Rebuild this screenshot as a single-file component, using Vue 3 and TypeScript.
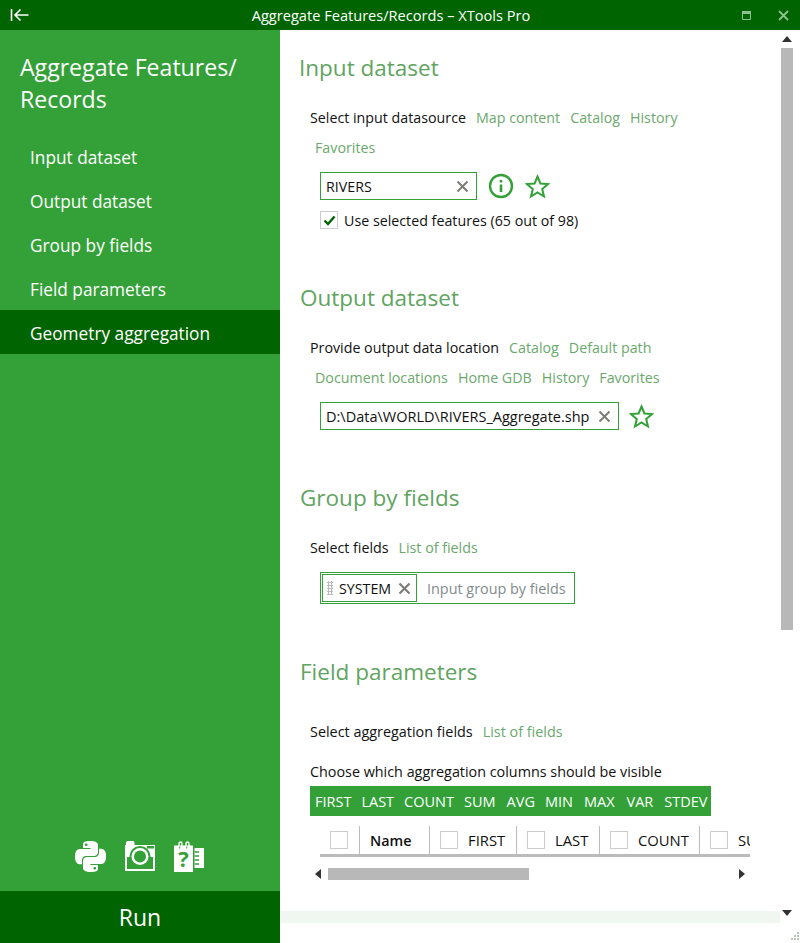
<script setup lang="ts">
const navItems = [
  { label: 'Input dataset', active: false },
  { label: 'Output dataset', active: false },
  { label: 'Group by fields', active: false },
  { label: 'Field parameters', active: false },
  { label: 'Geometry aggregation', active: true },
]
const aggregations = ['FIRST', 'LAST', 'COUNT', 'SUM', 'AVG', 'MIN', 'MAX', 'VAR', 'STDEV']
const columns = [
  { label: 'FIRST', width: 87 },
  { label: 'LAST', width: 83 },
  { label: 'COUNT', width: 100 },
  { label: 'SUM', width: 60 },
]
</script>

<template>
  <div class="window">
    <header class="titlebar">
      <svg class="back" width="20" height="14" viewBox="0 0 20 14">
        <path d="M1.500 1V13M18.500 7H5.500M10.500 1.500L5 7L10.500 12.500" fill="none" stroke="#fff" stroke-width="1.600" />
      </svg>
      <span class="title">Aggregate Features/Records – XTools Pro</span>
      <svg class="win-max" width="9" height="9" viewBox="0 0 9 9">
        <path d="M.5 .5H8.500V8.500H.5Z M.5 2.500H8.500" fill="none" stroke="#8fc08f" stroke-width="1" />
        <rect x="0" y="0" width="9" height="3" fill="#8fc08f" />
      </svg>
      <svg class="win-close" width="11" height="11" viewBox="0 0 11 11">
        <path d="M1 1L10 10M10 1L1 10" fill="none" stroke="#8fc08f" stroke-width="1.800" />
      </svg>
    </header>

    <div class="body">
      <aside class="sidebar">
        <h1 class="side-title">Aggregate Features/<br />Records</h1>
        <nav class="nav">
          <div v-for="item in navItems" :key="item.label" class="nav-item" :class="{ active: item.active }">
            {{ item.label }}
          </div>
        </nav>
        <div class="tools">
          <svg width="31" height="31" viewBox="0 0 24 24" fill="#fff">
            <path d="M14.250.18l.9.2.73.26.59.3.45.32.34.34.25.34.16.33.1.3.04.26.02.2-.01.13V8.500l-.05.63-.13.55-.21.46-.26.38-.3.31-.33.25-.35.19-.35.14-.33.1-.3.07-.26.04-.21.02H8.770l-.69.05-.59.14-.5.22-.41.27-.33.32-.27.35-.2.36-.15.37-.1.35-.07.32-.04.27-.02.21v3.060H3.170l-.21-.03-.28-.07-.32-.12-.35-.18-.36-.26-.36-.36-.35-.46-.32-.59-.28-.73-.21-.88-.14-1.050-.05-1.230.06-1.220.16-1.040.24-.87.32-.71.36-.57.4-.44.42-.33.42-.24.4-.16.36-.1.32-.05.24-.01h.16l.06.01h8.160v-.83H6.180l-.01-2.750-.02-.37.05-.34.11-.31.17-.28.25-.26.31-.23.38-.2.44-.18.51-.15.58-.12.64-.1.71-.06.77-.04.84-.02 1.270.05zm-6.300 1.980l-.23.33-.08.41.08.41.23.34.33.22.41.09.41-.09.33-.22.23-.34.08-.41-.08-.41-.23-.33-.33-.22-.41-.09-.41.09zm13.090 3.950l.28.06.32.12.35.18.36.27.36.35.35.47.32.59.28.73.21.88.14 1.040.05 1.230-.06 1.230-.16 1.040-.24.86-.32.71-.36.57-.4.45-.42.33-.42.24-.4.16-.36.09-.32.05-.24.02-.16-.01h-8.220v.82h5.840l.01 2.760.02.36-.05.34-.11.31-.17.29-.25.25-.31.24-.38.2-.44.17-.51.15-.58.13-.64.09-.71.07-.77.04-.84.01-1.270-.04-1.070-.14-.9-.2-.73-.25-.59-.3-.45-.33-.34-.34-.25-.34-.16-.33-.1-.3-.04-.25-.02-.2.01-.13v-5.340l.05-.64.13-.54.21-.46.26-.38.3-.32.33-.24.35-.2.35-.14.33-.1.3-.06.26-.04.21-.02.13-.01h5.840l.69-.05.59-.14.5-.21.41-.28.33-.32.27-.35.2-.36.15-.36.1-.35.07-.32.04-.28.02-.21V6.070h2.090l.14.01zm-6.470 14.250l-.23.33-.08.41.08.41.23.33.33.23.41.08.41-.08.33-.23.23-.33.08-.41-.08-.41-.23-.33-.33-.23-.41-.08-.41.08z" />
          </svg>
          <svg width="30" height="30" viewBox="0 0 30 30">
            <path fill="#fff" d="M0 30V4H1V1.500Q1 0 2.500 0H8Q9.500 0 9.500 1.500V4H30V30Z" />
            <rect x="2" y="16" width="26" height="12" fill="#33a137" />
            <rect x="22" y="5" width="7" height="2.500" fill="#33a137" />
            <circle cx="15" cy="15.500" r="10.500" fill="#33a137" />
            <circle cx="15" cy="15.500" r="8.500" fill="#fff" />
            <circle cx="15" cy="15.500" r="6" fill="#33a137" />
          </svg>
          <svg width="31" height="31" viewBox="0 0 31 31">
            <path fill="#fff" d="M0 4.500H19V31H0Z" />
            <path d="M5 7V2.500A1.500 1.500 0 0 1 8 2.500V7M12 7V2.500A1.500 1.500 0 0 1 15 2.500V7" fill="none" stroke="#fff" stroke-width="1.400" />
            <path d="M5.700 5.500V7.500M12.700 5.500V7.500" stroke="#33a137" stroke-width="1" />
            <path fill="#fff" d="M20.500 7H30V27H20.500Z" />
            <path d="M20.500 11H25M20.500 15H25M20.500 19H25M20.500 23H25" stroke="#33a137" stroke-width="1.500" />
            <text x="9.500" y="26" text-anchor="middle" class="help-mark">?</text>
          </svg>
        </div>
        <button class="run">Run</button>
      </aside>

      <main class="content">
        <section class="section s-input">
          <h2 class="heading">Input dataset</h2>
          <div class="links">
            <span class="lead">Select input datasource</span>
            <span class="link">Map content</span><span class="link">Catalog</span><span class="link">History</span><span class="link">Favorites</span>
          </div>
          <div class="field-row">
            <div class="input w-short">
              <span>RIVERS</span>
              <svg class="clear" width="13" height="13" viewBox="0 0 13 13"><path d="M1.500 1.500L11.500 11.500M11.500 1.500L1.500 11.500" /></svg>
            </div>
            <svg class="info" width="26" height="26" viewBox="0 0 26 26">
              <circle cx="13" cy="13" r="11" fill="none" stroke="#33a137" stroke-width="2.400" />
              <path d="M13 11.500V19M13 7V9.500" stroke="#33a137" stroke-width="2.600" fill="none" />
            </svg>
            <svg class="star" width="25" height="25" viewBox="0 0 25 25">
              <path d="M12.500 2.500L15.400 9.500L23 10.100L17.200 15L19 22.500L12.500 18.500L6 22.500L7.800 15L2 10.100L9.600 9.500Z" fill="none" stroke="#33a137" stroke-width="2" />
            </svg>
          </div>
          <label class="check-row">
            <span class="checkbox">
              <svg width="13" height="11" viewBox="0 0 13 11"><path d="M1.500 5.500L5 9L11.500 1.500" fill="none" stroke="#006400" stroke-width="2.400" /></svg>
            </span>
            <span>Use selected features (65 out of 98)</span>
          </label>
        </section>

        <section class="section s-output">
          <h2 class="heading shift">Output dataset</h2>
          <div class="links">
            <span class="lead">Provide output data location</span>
            <span class="link">Catalog</span><span class="link">Default path</span><span class="link">Document locations</span><span class="link">Home GDB</span><span class="link">History</span><span class="link">Favorites</span>
          </div>
          <div class="field-row">
            <div class="input w-long">
              <span>D:\Data\WORLD\RIVERS_Aggregate.shp</span>
              <svg class="clear" width="13" height="13" viewBox="0 0 13 13"><path d="M1.500 1.500L11.500 11.500M11.500 1.500L1.500 11.500" /></svg>
            </div>
            <svg class="star" width="25" height="25" viewBox="0 0 25 25">
              <path d="M12.500 2.500L15.400 9.500L23 10.100L17.200 15L19 22.500L12.500 18.500L6 22.500L7.800 15L2 10.100L9.600 9.500Z" fill="none" stroke="#33a137" stroke-width="2" />
            </svg>
          </div>
        </section>

        <section class="section s-group">
          <h2 class="heading shift">Group by fields</h2>
          <div class="links">
            <span class="lead">Select fields</span>
            <span class="link">List of fields</span>
          </div>
          <div class="tag-box">
            <div class="tag">
              <span class="grip"></span>
              <span>SYSTEM</span>
              <svg class="clear" width="13" height="13" viewBox="0 0 13 13"><path d="M1.500 1.500L11.500 11.500M11.500 1.500L1.500 11.500" /></svg>
            </div>
            <span class="placeholder">Input group by fields</span>
          </div>
        </section>

        <section class="section s-params">
          <h2 class="heading shift">Field parameters</h2>
          <div class="links links-wide">
            <span class="lead">Select aggregation fields</span>
            <span class="link">List of fields</span>
          </div>
          <div class="choose">Choose which aggregation columns should be visible</div>
          <div class="agg-bar">
            <span v-for="a in aggregations" :key="a">{{ a }}</span>
          </div>
          <div class="table">
            <div class="cell cell-check"><span class="checkbox"></span></div>
            <div class="cell cell-name">Name</div>
            <div v-for="c in columns" :key="c.label" class="cell" :style="{ width: c.width + 'px' }">
              <span class="checkbox"></span><span class="col-label">{{ c.label }}</span>
            </div>
          </div>
          <div class="hscroll">
            <svg width="6" height="10" viewBox="0 0 6 10"><path d="M6 0V10L0 5Z" fill="#333" /></svg>
            <div class="hthumb"></div>
            <svg class="hright" width="6" height="10" viewBox="0 0 6 10"><path d="M0 0V10L6 5Z" fill="#333" /></svg>
          </div>
        </section>

        <div class="strip"></div>

        <div class="vscroll">
          <svg class="arrow-up" width="10" height="6" viewBox="0 0 10 6"><path d="M0 6H10L5 0Z" fill="#333" /></svg>
          <div class="vthumb"></div>
          <svg class="arrow-down" width="10" height="6" viewBox="0 0 10 6"><path d="M0 0H10L5 6Z" fill="#333" /></svg>
        </div>
        <svg class="grip-corner" width="12" height="12" viewBox="0 0 12 12">
          <path d="M9 1h2v2H9zM6 4h2v2H6zM9 4h2v2H9zM3 7h2v2H3zM6 7h2v2H6zM9 7h2v2H9z" fill="#b8c8b8" />
        </svg>
      </main>
    </div>
  </div>
</template>

<style scoped>
.window {
  width: 800px;
  height: 943px;
  display: flex;
  flex-direction: column;
  overflow: hidden;
  background: #fff;
  font-family: "Open Sans", "Liberation Sans", sans-serif;
  font-size: 14.250px;
  color: #111;
}
.titlebar {
  height: 30px;
  flex: none;
  background: #006400;
  display: flex;
  align-items: center;
  position: relative;
  color: #fff;
}
.back { margin-left: 10px; }
.title {
  position: absolute;
  left: 0;
  right: 0;
  padding-right: 18px;
  text-align: center;
  font-size: 14.600px;
  pointer-events: none;
}
.win-max { margin-left: auto; margin-right: 27px; }
.win-close { margin-right: 11px; }
.body { flex: 1; display: flex; min-height: 0; }
.sidebar {
  width: 280px;
  flex: none;
  background: #33a137;
  color: #fff;
  display: flex;
  flex-direction: column;
}
.side-title {
  margin: 21px 0 0 20px;
  font-weight: 400;
  font-size: 23.100px;
  line-height: 32px;
}
.nav { margin-top: 19px; }
.nav-item {
  height: 44px;
  line-height: 47px;
  padding-left: 30px;
  font-size: 17.250px;
}
.nav-item.active { background: #006400; }
.tools {
  margin-top: auto;
  height: 50px;
  display: flex;
  align-items: flex-start;
  justify-content: center;
  gap: 19px;
}
.help-mark {
  font-family: "Open Sans", sans-serif;
  font-weight: 700;
  font-size: 22px;
  fill: #33a137;
}
.run {
  height: 52px;
  border: 0;
  background: #006400;
  color: #fff;
  font-family: inherit;
  font-size: 23px;
  padding: 0;
}
.content {
  position: relative;
  flex: 1;
  padding-left: 19px;
  overflow: hidden;
}
.section { width: 470px; }
.s-input { padding-top: 21px; }
.s-output { padding-top: 52px; }
.s-group { padding-top: 51px; }
.s-params { padding-top: 51px; }
.heading {
  margin: 0;
  font-weight: 400;
  font-size: 22.500px;
  line-height: 34px;
  color: #5fa460;
}
.heading.shift { margin-left: 1px; }
.links {
  margin-top: 18px;
  padding-left: 11px;
  display: flex;
  flex-wrap: wrap;
  width: 420px;
}
.links-wide { margin-top: 28px; font-size: 14.400px; }
.lead, .link { line-height: 30px; white-space: nowrap; }
.lead { margin-right: 10px; }
.link { color: #6aa96c; margin-right: 10px; }
.s-input .links .link:last-child { margin-left: 5px; }
.s-output .links .link:nth-child(4) { margin-left: 5px; }
.field-row {
  display: flex;
  align-items: center;
  margin: 9px 0 0 21px;
}
.input {
  height: 28px;
  box-sizing: border-box;
  border: 1px solid #33a137;
  display: flex;
  align-items: center;
  justify-content: space-between;
  padding: 0 7px 0 5px;
}
.w-short { width: 157px; }
.w-long { width: 299px; white-space: nowrap; font-size: 14.500px; }
.clear { fill: none; stroke: #7d7d78; stroke-width: 2; flex: none; }
.info { margin-left: 11px; }
.star { margin-left: 10px; }
.info + .star { margin-left: 11px; }
.check-row {
  display: flex;
  align-items: center;
  gap: 6px;
  margin: 11px 0 0 21px;
  height: 18px;
}
.checkbox {
  width: 18px;
  height: 18px;
  box-sizing: border-box;
  border: 1px solid #ccc;
  display: inline-flex;
  align-items: center;
  justify-content: center;
  flex: none;
}
.tag-box {
  margin: 9px 0 0 21px;
  width: 255px;
  height: 32px;
  box-sizing: border-box;
  border: 1px solid #33a137;
  display: flex;
  align-items: center;
  padding-left: 1px;
}
.tag {
  width: 95px;
  height: 28px;
  box-sizing: border-box;
  border: 1px solid #33a137;
  display: flex;
  align-items: center;
  padding-left: 4px;
  flex: none;
}
.grip {
  width: 6px;
  height: 14px;
  margin-right: 6px;
  background-image: radial-gradient(#bbb 1px, transparent 1.100px);
  background-size: 3px 3px;
  flex: none;
}
.tag .clear { margin-left: 7px; stroke-width: 2.200; }
.placeholder { margin-left: 10px; color: #7f8c8d; white-space: nowrap; font-size: 14.400px; }
.choose { margin: 15px 0 0 11px; line-height: 20px; font-size: 14.350px; }
.agg-bar {
  margin: 4px 0 0 11px;
  height: 30px;
  width: 401px;
  box-sizing: border-box;
  background: #33a137;
  color: #fff;
  display: flex;
  align-items: center;
  gap: 10px;
  padding-left: 5px;
  white-space: nowrap;
  font-size: 14.500px;
}
.agg-bar span:nth-child(5), .agg-bar span:nth-child(7), .agg-bar span:nth-child(9) { margin-left: 1px; }
.agg-bar span:nth-child(8) { margin-left: 2px; }
.table {
  margin: 10px 0 0 21px;
  width: 430px;
  height: 31px;
  box-sizing: border-box;
  border-bottom: 3px solid #bbb;
  display: flex;
  overflow: hidden;
}
.cell {
  flex: none;
  box-sizing: border-box;
  height: 28px;
  border-right: 1px solid #bbb;
  display: flex;
  align-items: center;
  padding-left: 10px;
  white-space: nowrap;
  font-size: 14.800px;
}
.cell-check { width: 40px; }
.cell-name { width: 70px; font-weight: 600; font-size: 14.300px; }
.col-label { margin-left: 10px; }
.hscroll {
  margin: 11px 0 0 16px;
  width: 430px;
  height: 12px;
  display: flex;
  align-items: center;
  position: relative;
}
.hthumb { width: 201px; height: 12px; background: #b8b8b8; margin-left: 7px; }
.hright { margin-left: auto; }
.strip {
  position: absolute;
  left: 0;
  right: 20px;
  bottom: 20px;
  height: 12px;
  background: #f0f7f0;
}
.vscroll {
  position: absolute;
  top: 0;
  right: 0;
  bottom: 0;
  width: 20px;
}
.arrow-up { position: absolute; left: 2px; top: 6px; }
.arrow-down { position: absolute; left: 2px; bottom: 27px; }
.vthumb {
  position: absolute;
  left: 1px;
  top: 18px;
  width: 12px;
  height: 582px;
  background: #b8b8b8;
}
.grip-corner { position: absolute; right: 0; bottom: 0; }
</style>

<style>
html, body { margin: 0; padding: 0; }
</style>
